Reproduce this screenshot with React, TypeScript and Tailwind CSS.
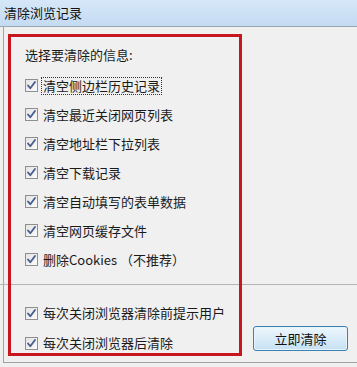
import React from "react";

const font = { fontFamily: '"Noto Sans CJK SC", "Liberation Sans", sans-serif' };

function Check() {
  return (
    <span className="w-[13px] h-[13px] shrink-0 border border-[#8e8f8f] bg-gradient-to-br from-[#e4e4e4] to-[#fbfbfb] flex items-center justify-center">
      <svg width="11" height="11" viewBox="0 0 11 11">
        <path d="M2 5.5 L4.3 8.2 L9 2" fill="none" stroke="#4b5f8f" strokeWidth="1.9" strokeLinecap="round" strokeLinejoin="round" />
      </svg>
    </span>
  );
}

function Row({ label, focus, h }: { label: string; focus?: boolean; h: string }) {
  return (
    <div className={`flex items-center ${h}`}>
      <Check />
      <span
        className={`ml-[3px] text-[13px] leading-[16px] text-[#1a1a1a] px-[1px] ${
          focus ? "border border-dotted border-[#333]" : "border border-transparent"
        }`}
      >
        {label}
      </span>
    </div>
  );
}

export default function App() {
  const top = [
    "清空侧边栏历史记录",
    "清空最近关闭网页列表",
    "清空地址栏下拉列表",
    "清空下载记录",
    "清空自动填写的表单数据",
    "清空网页缓存文件",
    "删除Cookies （不推荐）",
  ];
  return (
    <div className="relative w-[357px] h-[367px] bg-[#f0f0f0] overflow-hidden" style={font}>
      <div className="h-[27px] bg-gradient-to-b from-[#d6e7f8] to-[#c4dbf2] border-b border-[#9aa6b2] flex items-center pl-[4px]">
        <span className="text-[13px] text-[#111]">清除浏览记录</span>
      </div>
      <div className="ml-[3px] h-[336px] border-l border-b border-[#a3a3a3] flex flex-col">
        <div className="pl-[21px] pt-[18px]">
          <div className="h-[20px] flex items-center text-[13px] text-[#1a1a1a]">选择要清除的信息:</div>
          <div className="mt-[6px] flex flex-col">
            {top.map((t, i) => (
              <Row key={t} label={t} focus={i === 0} h="h-[29px]" />
            ))}
          </div>
        </div>
        <div className="mt-[10px] -ml-[4px] h-px bg-[#b5b5b5]" />
        <div className="flex-1 flex items-end justify-between pl-[21px] pt-[12px] pb-[4px]">
          <div className="flex flex-col">
            <Row label="每次关闭浏览器清除前提示用户" h="h-[30px]" />
            <Row label="每次关闭浏览器后清除" h="h-[30px]" />
          </div>
          <button className="mb-[7px] mr-[9px] w-[95px] h-[25px] rounded-[3px] border border-[#3c7fb1] bg-gradient-to-b from-[#eef7fd] to-[#c5e1f3] shadow-[inset_0_0_0_1px_#e6f4fc] text-[13px] text-[#111] flex items-center justify-center">
            立即清除
          </button>
        </div>
      </div>
      <div className="absolute left-[8px] top-[34px] w-[234px] h-[322px] border-[3px] border-[#c8161e] pointer-events-none" />
    </div>
  );
}
